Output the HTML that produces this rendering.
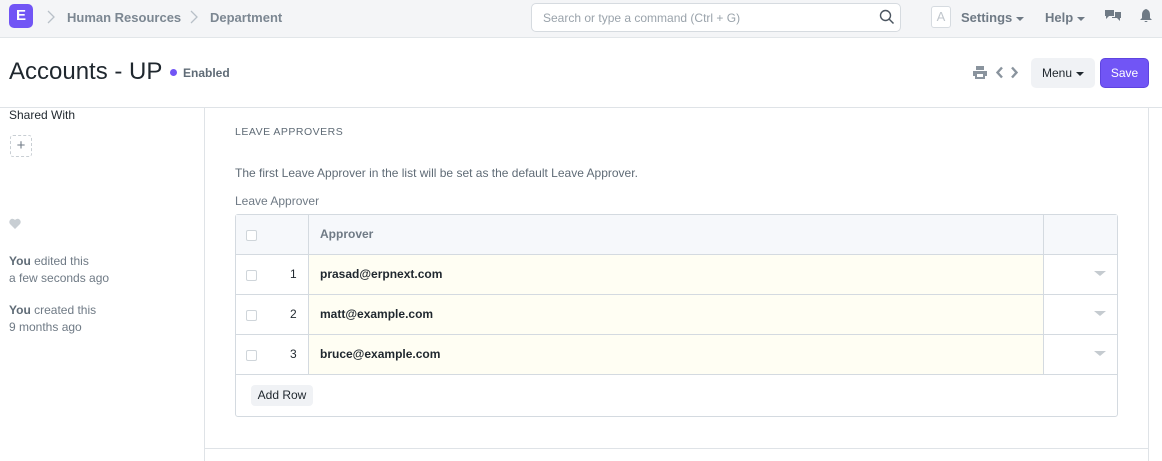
<!DOCTYPE html>
<html><head><style>
*{box-sizing:border-box;margin:0;padding:0}
body{width:1162px;height:461px;overflow:hidden;background:#fff;font-family:"Liberation Sans",sans-serif;color:#1f272e;position:relative}
.abs{position:absolute}
.nav{left:0;top:0;width:1162px;height:38px;background:#f4f5f7;border-bottom:1px solid #e2e6e9}
.logo{left:9px;top:4px;width:24px;height:24px;background:#7155f5;border-radius:5px;color:#fff;font-weight:bold;font-size:15px;text-align:center;line-height:24px}
.crumb{top:10px;font-size:13px;font-weight:bold;color:#7c8792}
.search{left:531px;top:3px;width:370px;height:29px;border:1px solid #d6dbe0;border-radius:5px;background:#fff;font-size:12px;color:#9aa3ab;padding:7px 11px}
.nv{top:10px;font-size:13px;font-weight:bold;color:#6f7a85}
.caret{display:inline-block;border-left:4px solid transparent;border-right:4px solid transparent;border-top:4px solid #6f7a85;vertical-align:middle;margin-left:4px}
h1{position:absolute;left:9px;top:58px;font-size:24px;font-weight:normal;color:#1f272e}
.cell{position:absolute;font-size:12px}
.cb{position:absolute;width:11px;height:11px;border:1px solid #cfd5da;border-radius:2px;background:#fff}
.dd{position:absolute;width:0;height:0;border-left:6px solid transparent;border-right:6px solid transparent;border-top:5px solid #c5cbd0}
</style></head><body>
<div class="abs nav"></div>
<div class="abs logo">E</div>
<svg class="abs" style="left:47px;top:10px" width="8" height="14" viewBox="0 0 8 14"><path d="M1 1l6 6-6 6" fill="none" stroke="#b8c0c8" stroke-width="1.3"/></svg>
<div class="abs crumb" style="left:67px">Human Resources</div>
<svg class="abs" style="left:190px;top:10px" width="8" height="14" viewBox="0 0 8 14"><path d="M1 1l6 6-6 6" fill="none" stroke="#b8c0c8" stroke-width="1.3"/></svg>
<div class="abs crumb" style="left:210px">Department</div>
<div class="abs search">Search or type a command (Ctrl + G)</div>
<svg class="abs" style="left:879px;top:9px" width="16" height="16" viewBox="0 0 16 16"><circle cx="6.5" cy="6.5" r="5" fill="none" stroke="#4b5560" stroke-width="1.4"/><path d="M10 10l4.5 4.5" stroke="#4b5560" stroke-width="1.5"/></svg>
<div class="abs" style="left:931px;top:6px;width:20px;height:22px;border:1px solid #d6dbe0;border-radius:3px;color:#c0c6cc;font-size:13px;text-align:center;line-height:20px;background:#fff">A</div>
<div class="abs nv" style="left:961px">Settings<span class="caret"></span></div>
<div class="abs nv" style="left:1045px">Help<span class="caret"></span></div>
<svg class="abs" style="left:1105px;top:9px" width="16" height="14" viewBox="0 0 16 14"><path d="M0 1h9v6H4l-3 3V7H0z M10 3h6v6h-1v3l-3-3H7V8h3z" fill="#6f7a85"/></svg>
<svg class="abs" style="left:1140px;top:9px" width="12" height="13" viewBox="0 0 12 13"><path d="M6 0C3 1 2 3 2 6v3L0 11h12l-2-2V6c0-3-1-5-4-6z M4.5 12h3a1.5 1 0 01-3 0z" fill="#6f7a85"/></svg>

<h1>Accounts - UP</h1>
<div class="abs" style="left:170px;top:69px;width:7px;height:7px;border-radius:50%;background:#7155f5"></div>
<div class="abs" style="left:183px;top:66px;font-size:12px;font-weight:bold;color:#5f6b76">Enabled</div>
<svg class="abs" style="left:973px;top:66px" width="14" height="13" viewBox="0 0 14 13"><path d="M3 0h8v4H3z M0 5h14v5h-2v3H2v-3H0z" fill="#8a949e"/><rect x="4" y="8" width="6" height="3" fill="#fff"/></svg>
<svg class="abs" style="left:995px;top:66px" width="10" height="13" viewBox="0 0 10 13"><path d="M7 1.5L2.5 6.5 7 11.5" fill="none" stroke="#8a949e" stroke-width="2.4"/></svg>
<svg class="abs" style="left:1009px;top:66px" width="10" height="13" viewBox="0 0 10 13"><path d="M3 1.5L7.5 6.5 3 11.5" fill="none" stroke="#8a949e" stroke-width="2.4"/></svg>
<div class="abs" style="left:1031px;top:58px;width:64px;height:30px;background:#f0f2f5;border-radius:5px;font-size:12px;color:#1f272e;padding:8px 0 0 11px">Menu<span class="caret" style="border-top-color:#1f272e"></span></div>
<div class="abs" style="left:1100px;top:58px;width:49px;height:30px;background:#7155f5;border:1px solid #5e44e0;border-radius:5px;font-size:12px;color:#fff;text-align:center;line-height:28px">Save</div>

<div class="abs" style="left:0;top:107px;width:1162px;border-top:1px solid #dfe3e7"></div>
<div class="abs" style="left:204px;top:107px;height:354px;border-left:1px solid #dfe3e7"></div>
<div class="abs" style="left:1148px;top:107px;height:354px;border-left:1px solid #dfe3e7"></div>
<div class="abs" style="left:204px;top:448px;width:945px;border-top:1px solid #dfe3e7"></div>

<div class="abs" style="left:9px;top:108px;font-size:12px;color:#1f272e">Shared With</div>
<div class="abs" style="left:10px;top:135px;width:22px;height:22px;border:1px dashed #c8ced3;border-radius:3px;color:#6f7a85;text-align:center;line-height:20px;font-size:15px">+</div>
<svg class="abs" style="left:9px;top:218px" width="12" height="11" viewBox="0 0 12 11"><path d="M6 11L1 6A3 3 0 016 2a3 3 0 015 4z" fill="#c8ced3"/></svg>
<div class="abs" style="left:9px;top:253px;font-size:12px;color:#6f7a85;line-height:17px"><b style="color:#5f6b76">You</b> edited this<br>a few seconds ago</div>
<div class="abs" style="left:9px;top:302px;font-size:12px;color:#6f7a85;line-height:17px"><b style="color:#5f6b76">You</b> created this<br>9 months ago</div>

<div class="abs" style="left:235px;top:126px;font-size:10.5px;color:#5f6b76;letter-spacing:.5px">LEAVE APPROVERS</div>
<div class="abs" style="left:235px;top:166px;font-size:12px;color:#5f6b76">The first Leave Approver in the list will be set as the default Leave Approver.</div>
<div class="abs" style="left:235px;top:194px;font-size:12px;color:#6f7a85">Leave Approver</div>

<div class="abs" style="left:235px;top:214px;width:883px;height:203px;border:1px solid #d4dae0;border-radius:3px"></div>
<div class="abs" style="left:236px;top:215px;width:881px;height:39px;background:#f6f8fb"></div>
<div class="abs" style="left:309px;top:255px;width:734px;height:119px;background:#fffef3"></div>
<div class="abs" style="left:235px;top:254px;width:883px;border-top:1px solid #d4dae0"></div>
<div class="abs" style="left:235px;top:294px;width:883px;border-top:1px solid #d4dae0"></div>
<div class="abs" style="left:235px;top:334px;width:883px;border-top:1px solid #d4dae0"></div>
<div class="abs" style="left:235px;top:374px;width:883px;border-top:1px solid #d4dae0"></div>
<div class="abs" style="left:308px;top:214px;height:160px;border-left:1px solid #d4dae0"></div>
<div class="abs" style="left:1043px;top:214px;height:160px;border-left:1px solid #d4dae0"></div>
<div class="cb" style="left:246px;top:230px"></div>
<div class="cell" style="left:320px;top:227px;font-weight:bold;color:#6f7a85">Approver</div>
<div class="cb" style="left:246px;top:270px"></div><div class="cell" style="left:290px;top:267px">1</div><div class="cell" style="left:320px;top:267px;font-weight:bold">prasad@erpnext.com</div><div class="dd" style="left:1094px;top:271px"></div>
<div class="cb" style="left:246px;top:310px"></div><div class="cell" style="left:290px;top:307px">2</div><div class="cell" style="left:320px;top:307px;font-weight:bold">matt@example.com</div><div class="dd" style="left:1094px;top:311px"></div>
<div class="cb" style="left:246px;top:350px"></div><div class="cell" style="left:290px;top:347px">3</div><div class="cell" style="left:320px;top:347px;font-weight:bold">bruce@example.com</div><div class="dd" style="left:1094px;top:351px"></div>
<div class="abs" style="left:251px;top:385px;width:62px;height:21px;background:#f0f2f5;border-radius:4px;font-size:12px;text-align:center;line-height:21px">Add Row</div>
</body></html>
